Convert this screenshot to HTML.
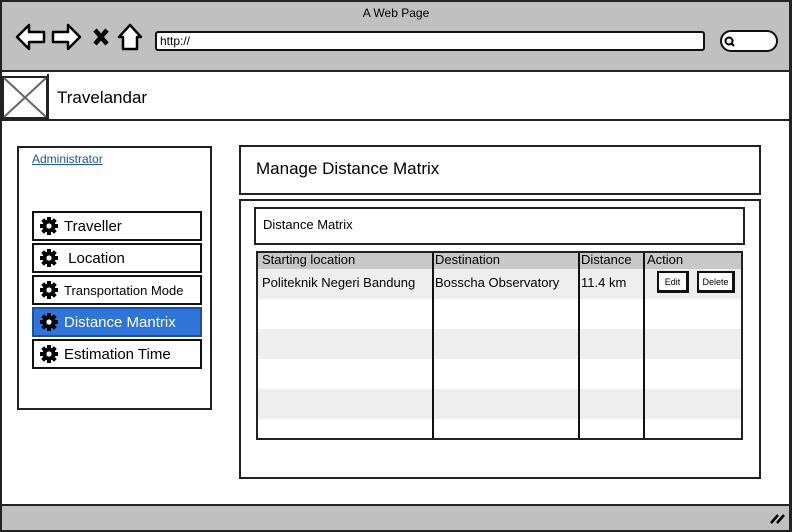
<!DOCTYPE html>
<html><head><meta charset="utf-8"><style>
*{box-sizing:border-box;margin:0;padding:0}
body{width:792px;height:532px;position:relative;overflow:hidden;background:#fff;font-family:"Liberation Sans",sans-serif;color:#000}
.a{position:absolute}
.bx{position:absolute;border:2px solid #222;background:#fff}
.btn{position:absolute;border:2px solid #111;background:#fff;font-size:15px;display:flex;align-items:center;padding-left:5px}
.btn svg{margin-right:5px;flex:none}
.t{position:absolute;font-size:13px;white-space:nowrap}
</style></head><body>
<div class="a" style="left:0;top:0;width:792px;height:532px;border:2px solid #222;border-right-width:3px"></div>
<div class="a" style="left:2px;top:2px;width:787px;height:70px;background:#c0c0c0;border-bottom:2px solid #222"></div>
<div class="t" style="left:0;width:792px;text-align:center;top:6px;font-size:12px">A Web Page</div>
<svg class="a" style="left:14px;top:22px" width="130" height="30" viewBox="0 0 130 30">
<path d="M3 15 L15 3 L15 10 L30 10 L30 20 L15 20 L15 27 Z" fill="#fff" stroke="#000" stroke-width="2.5" stroke-linejoin="round"/>
<path d="M66 15 L54 3 L54 10 L39 10 L39 20 L54 20 L54 27 Z" fill="#fff" stroke="#000" stroke-width="2.5" stroke-linejoin="round"/>
<path d="M81 8 L93 22 M93 8 L81 22" stroke="#000" stroke-width="4.5"/>
<path d="M116 3 L105 15 L109 15 L109 27 L123 27 L123 15 L127 15 Z" fill="#fff" stroke="#000" stroke-width="2.5" stroke-linejoin="round"/>
</svg>
<div class="a" style="left:155px;top:31px;width:550px;height:20px;background:#fff;border:2px solid #111;border-radius:3px"></div>
<div class="t" style="left:160px;top:34px;font-size:12px">http://</div>
<div class="a" style="left:720px;top:30px;width:58px;height:22px;background:#fff;border:2px solid #111;border-radius:11px"></div>
<svg class="a" style="left:723px;top:35px" width="14" height="14"><circle cx="6" cy="6" r="3.5" fill="none" stroke="#000" stroke-width="2"/><path d="M8 8 L11 11" stroke="#000" stroke-width="2"/></svg>
<div class="a" style="left:2px;top:74px;width:787px;height:47px;border-bottom:2px solid #222"></div>
<svg class="a" style="left:2px;top:76px" width="46" height="43"><rect x="1" y="1" width="44" height="41" fill="#fff" stroke="#222" stroke-width="2"/><path d="M2 2 L44 41 M44 2 L2 41" stroke="#666" stroke-width="2"/></svg>
<div class="a" style="left:47px;top:74px;width:2px;height:47px;background:#222"></div>
<div class="t" style="left:57px;top:88px;font-size:17px">Travelandar</div>

<div class="bx" style="left:17px;top:146px;width:195px;height:264px"></div>
<div class="t" style="left:32px;top:152px;font-size:12px;color:#1a55b0;text-decoration:underline">Administrator</div>
<div class="btn" style="left:32px;top:211px;width:170px;height:30px">G<span>Traveller</span></div>
<div class="btn" style="left:32px;top:243px;width:170px;height:30px">G<span>&nbsp;Location</span></div>
<div class="btn" style="left:32px;top:275px;width:170px;height:30px;font-size:13px">G<span>Transportation Mode</span></div>
<div class="btn" style="left:32px;top:307px;width:170px;height:30px;background:#2f74d8;color:#fff;border-color:#1d4f9a">G<span>Distance Mantrix</span></div>
<div class="btn" style="left:32px;top:339px;width:170px;height:30px">G<span>Estimation Time</span></div>

<div class="bx" style="left:239px;top:145px;width:522px;height:50px"></div>
<div class="t" style="left:256px;top:159px;font-size:17px">Manage Distance Matrix</div>
<div class="bx" style="left:239px;top:199px;width:522px;height:280px"></div>
<div class="bx" style="left:254px;top:207px;width:491px;height:38px"></div>
<div class="t" style="left:263px;top:217px;font-size:13px">Distance Matrix</div>

<div class="bx" style="left:256px;top:251px;width:487px;height:189px;overflow:hidden">
<div class="a" style="left:0;top:0;width:100%;height:16px;background:#c8c8c8"></div>
<div class="a" style="left:0;top:16px;width:100%;height:30px;background:#eee"></div>
<div class="a" style="left:0;top:76px;width:100%;height:30px;background:#eee"></div>
<div class="a" style="left:0;top:136px;width:100%;height:30px;background:#eee"></div>
<div class="a" style="left:174px;top:0;width:2px;height:100%;background:#111"></div>
<div class="a" style="left:320px;top:0;width:2px;height:100%;background:#111"></div>
<div class="a" style="left:385px;top:0;width:2px;height:100%;background:#111"></div>
</div>
<div class="t" style="left:262px;top:252px">Starting location</div>
<div class="t" style="left:435px;top:252px">Destination</div>
<div class="t" style="left:581px;top:252px">Distance</div>
<div class="t" style="left:647px;top:252px">Action</div>
<div class="t" style="left:262px;top:275px">Politeknik Negeri Bandung</div>
<div class="t" style="left:435px;top:275px">Bosscha Observatory</div>
<div class="t" style="left:581px;top:275px">11.4 km</div>
<div class="a" style="left:657px;top:271px;width:32px;height:22px;border:2px solid #111;border-right-width:3px;border-bottom-width:3px;background:#fff;font-size:9px;text-align:center;line-height:19px">Edit</div>
<div class="a" style="left:697px;top:271px;width:38px;height:22px;border:2px solid #111;border-right-width:3px;border-bottom-width:3px;background:#fff;font-size:9px;text-align:center;line-height:19px">Delete</div>

<div class="a" style="left:2px;top:504px;width:787px;height:26px;background:#c0c0c0;border-top:2px solid #222"></div>
<svg class="a" style="left:768px;top:510px" width="20" height="16"><path d="M3 13 L10 5 M9 13 L16 5" stroke="#000" stroke-width="2.5"/></svg>
<script>
document.querySelectorAll('.btn').forEach(b=>{
 b.firstChild.replaceWith(document.createRange().createContextualFragment('<svg width="20" height="20" viewBox="0 0 20 20"><g fill="#000"><circle cx="10" cy="10" r="6.5"/>'+[0,45,90,135].map(a=>'<rect x="8" y="1" width="4" height="18" transform="rotate('+a+' 10 10)"/>').join('')+'</g><circle cx="10" cy="10" r="2.6" fill="#fff"/></svg>'));
});
</script>
</body></html>
